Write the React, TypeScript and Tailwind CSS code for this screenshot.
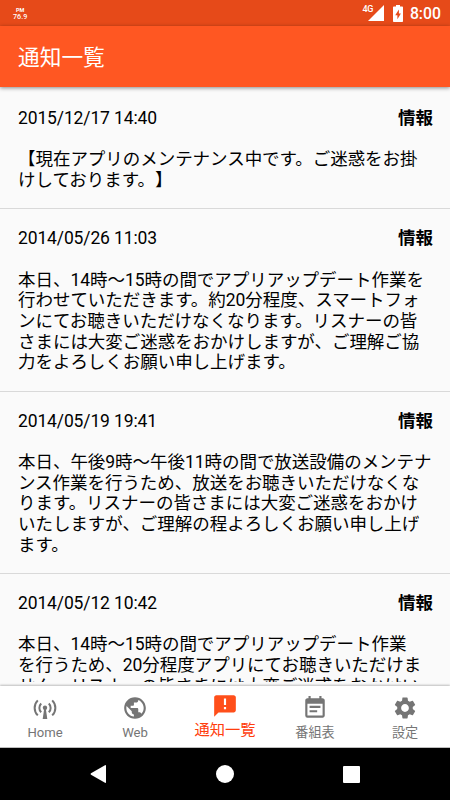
import React from 'react';
import { MdAnnouncement, MdEventNote, MdPublic, MdSettings } from 'react-icons/md';

const notices = [
  {
    id: 1,
    date: '2015/12/17 14:40',
    category: '情報',
    lines: ['【現在アプリのメンテナンス中です。ご迷惑をお掛', 'けしております。】'],
  },
  {
    id: 2,
    date: '2014/05/26 11:03',
    category: '情報',
    lines: [
      '本日、14時〜15時の間でアプリアップデート作業を',
      '行わせていただきます。約20分程度、スマートフォ',
      'ンにてお聴きいただけなくなります。リスナーの皆',
      'さまには大変ご迷惑をおかけしますが、ご理解ご協',
      '力をよろしくお願い申し上げます。',
    ],
  },
  {
    id: 3,
    date: '2014/05/19 19:41',
    category: '情報',
    lines: [
      '本日、午後9時〜午後11時の間で放送設備のメンテナ',
      'ンス作業を行うため、放送をお聴きいただけなくな',
      'ります。リスナーの皆さまには大変ご迷惑をおかけ',
      'いたしますが、ご理解の程よろしくお願い申し上げ',
      'ます。',
    ],
  },
  {
    id: 4,
    date: '2014/05/12 10:42',
    category: '情報',
    lines: [
      '本日、14時〜15時の間でアプリアップデート作業',
      'を行うため、20分程度アプリにてお聴きいただけま',
      'せん。リスナーの皆さまには大変ご迷惑をおかけい',
    ],
  },
];

const AntennaIcon = () => (
  <svg viewBox="0 0 24 22" className="h-[22px] w-6" fill="none" stroke="currentColor" strokeWidth="2">
    <path d="M4.8 3.4a10.5 10.5 0 0 0 0 15M19.2 3.4a10.5 10.5 0 0 1 0 15M8.2 6.5a6.2 6.2 0 0 0 0 8.8M15.8 6.5a6.2 6.2 0 0 1 0 8.8" />
    <circle cx="12" cy="10.8" r="2.2" fill="currentColor" stroke="none" />
    <path d="M11.2 11.5h1.6l1.5 10.5H9.7z" fill="currentColor" stroke="none" />
  </svg>
);

const tabs = [
  { label: 'Home', icon: <AntennaIcon /> },
  { label: 'Web', icon: <MdPublic size={26} /> },
  { label: '通知一覧', icon: <MdAnnouncement size={26} />, active: true },
  { label: '番組表', icon: <MdEventNote size={26} /> },
  { label: '設定', icon: <MdSettings size={26} /> },
];

const StatusBar = () => (
  <div className="flex h-[26px] shrink-0 items-center justify-between bg-[#e64a19] pl-[13px] pr-[9px] text-white">
    <div className="flex flex-col items-center">
      <span className="h-[6px] text-[5.5px] font-bold leading-[6px]">PM</span>
      <span className="h-[7px] text-[7.2px] font-medium leading-[7px]">76.9</span>
    </div>
    <div className="flex items-center">
      <span className="mb-2 text-[9px] font-medium leading-none tracking-[-0.4px]">4G</span>
      <svg viewBox="0 0 16 16" className="-ml-[5px] h-4 w-4" fill="currentColor">
        <path d="M0 16L16 0v16z" />
      </svg>
      <svg viewBox="0 0 10 17" className="ml-[9px] h-[17px] w-[10px]">
        <path d="M3 0h4v1.5h2.2a.8.8 0 0 1 .8.8v13.9a.8.8 0 0 1-.8.8H.8a.8.8 0 0 1-.8-.8V2.3a.8.8 0 0 1 .8-.8H3z" fill="#fff" />
        <path d="M5.9 4.5L2.2 10.3h2.2v4L7.9 8.4H5.9z" fill="#e64a19" />
      </svg>
      <span className="ml-[7px] pt-px text-[15.8px] font-medium leading-none">8:00</span>
    </div>
  </div>
);

const App = () => {
  return (
    <div className="flex h-[800px] w-[450px] flex-col overflow-hidden bg-[#fafafa] font-['Roboto','Noto_Sans_CJK_JP',sans-serif] text-black">
      <StatusBar />
      <header className="z-10 flex h-[61px] shrink-0 items-center bg-[#ff5722] px-[18px] pt-0.5 shadow-[0_1px_4px_rgba(0,0,0,0.45)]">
        <h1 className="text-[21.7px] leading-none text-white">通知一覧</h1>
      </header>

      <main className="h-[595px] shrink-0 overflow-hidden pt-0.5">
        {notices.map((notice) => (
          <article key={notice.id} className="border-b border-[#d9d9d9] pb-[17.8px] pl-[18px] pr-[17px] pt-[19px]">
            <div className="flex h-[21px] items-center justify-between text-[17.5px] leading-[21px]">
              <time className="tracking-[-0.13px]">{notice.date}</time>
              <span className="font-bold">{notice.category}</span>
            </div>
            <div className="mt-[20.3px] text-[17.5px] tracking-[-0.04px] [text-spacing-trim:space-all]">
              {notice.lines.map((line) => (
                <p key={line} className="h-[20.67px] whitespace-nowrap leading-[20.67px]">{line}</p>
              ))}
            </div>
          </article>
        ))}
      </main>

      <nav className="mt-1 flex h-[62px] shrink-0 border-b border-[#bdbdbd] bg-white shadow-[0_-1px_2px_rgba(0,0,0,0.25)]">
        {tabs.map((tab) => (
          <div
            key={tab.label}
            className={
              tab.active
                ? 'flex flex-1 flex-col items-center pt-[7px] text-[#ff3d0d]'
                : 'flex flex-1 flex-col items-center pt-[9px] text-[#757575]'
            }
          >
            <div className={tab.active ? 'flex h-[26px] items-center text-[#ff4f1a]' : 'flex h-[26px] items-center'}>
              {tab.icon}
            </div>
            <span className={tab.active ? 'text-[15.3px] leading-[22px]' : 'text-[13.1px] leading-[23px]'}>
              {tab.label}
            </span>
          </div>
        ))}
      </nav>

      <div className="flex h-[52px] shrink-0 items-center justify-center gap-[109px] bg-black pr-0.5 text-white">
        <svg viewBox="0 0 18 20" className="h-5 w-[18px]" fill="currentColor">
          <path d="M2 9.2L16 1.2q1-.5 1 .6v16.4q0 1.1-1 .6L2 10.8q-1-.8 0-1.6z" />
        </svg>
        <span className="h-[18px] w-[18px] rounded-full bg-white" />
        <span className="h-[17px] w-[17px] rounded-[1px] bg-white" />
      </div>
    </div>
  );
};

export default App;
